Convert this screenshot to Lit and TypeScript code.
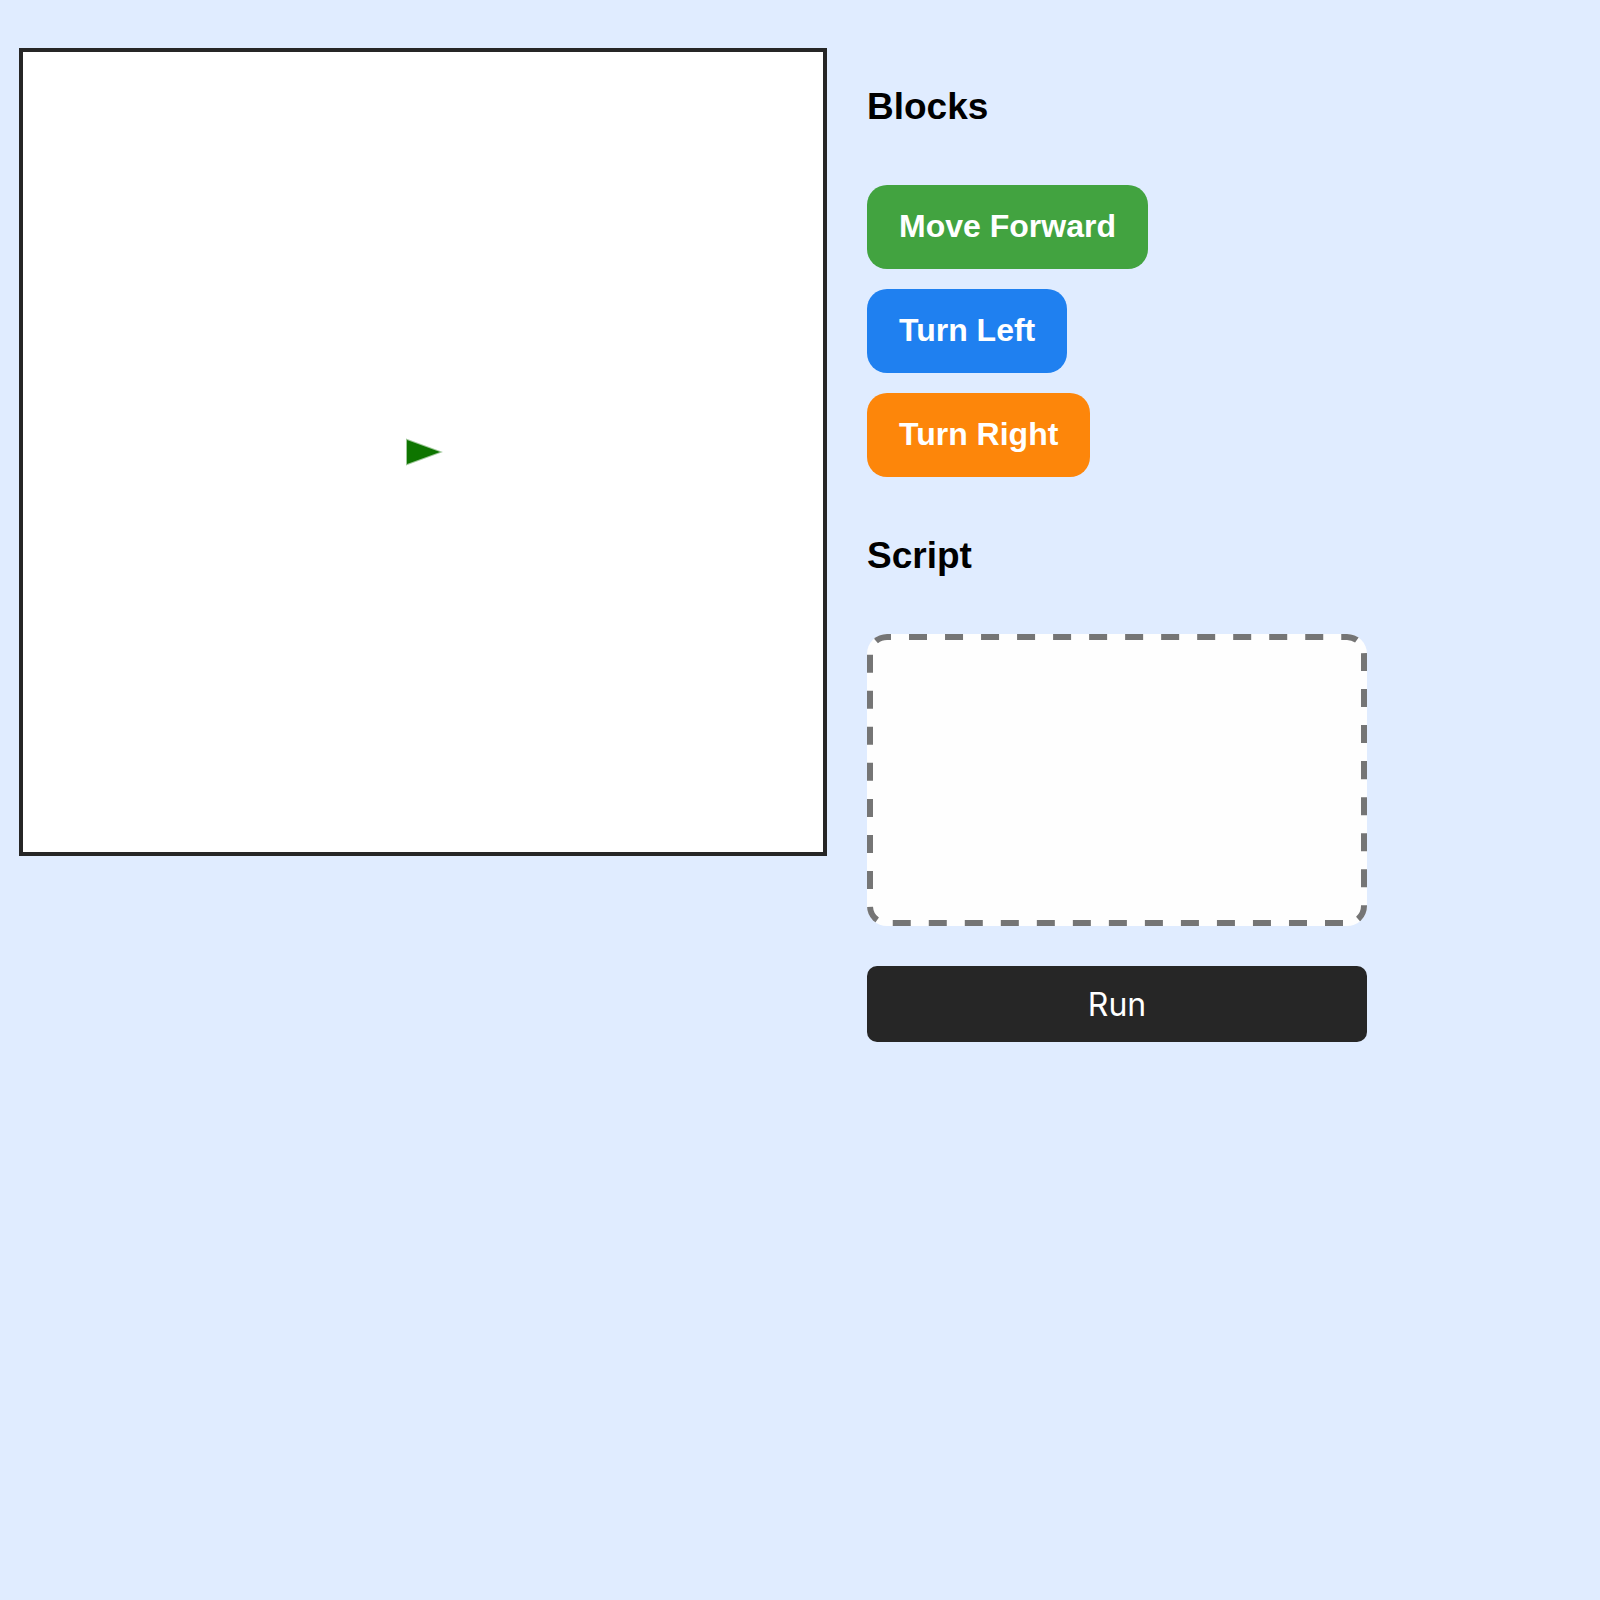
import { LitElement, html, css } from "lit";
import { customElement, state } from "lit/decorators.js";

type BlockKind = "forward" | "left" | "right";

const BLOCKS: { kind: BlockKind; label: string }[] = [
  { kind: "forward", label: "Move Forward" },
  { kind: "left", label: "Turn Left" },
  { kind: "right", label: "Turn Right" },
];

@customElement("app-root")
export class AppRoot extends LitElement {
  static styles = css`
    :host {
      display: block;
      min-height: 100vh;
      box-sizing: border-box;
      padding: 48px 19px;
      background: #e0ecff;
      color: #000;
      font-family: "Liberation Sans", Arial, sans-serif;
    }
    .layout {
      display: flex;
      align-items: flex-start;
      gap: 40px;
    }
    .stage {
      display: block;
      box-sizing: border-box;
      flex: 0 1 808px;
      min-width: 0;
      aspect-ratio: 1;
      border: 4px solid #262626;
      background: #fff;
    }
    .turtle {
      fill: #0e7500;
      stroke: #0e7500;
      stroke-opacity: 0.4;
      stroke-width: 2;
    }
    .panel {
      flex: 0 1 500px;
      min-width: 0;
      padding-top: 38px;
    }
    .heading {
      margin: 0 0 57px;
      font-size: 37px;
      line-height: 42px;
      font-weight: 700;
    }
    .palette {
      display: flex;
      flex-direction: column;
      align-items: flex-start;
      gap: 20px;
      margin-bottom: 58px;
    }
    .block {
      border: 0;
      border-radius: 20px;
      padding: 23px 32px 25px;
      color: #fff;
      font: 700 32px/36px "Liberation Sans", Arial, sans-serif;
      cursor: grab;
    }
    .forward {
      background: #42a340;
    }
    .left {
      background: #1f80f0;
    }
    .right {
      background: #fd860a;
    }
    .script {
      position: relative;
      display: flex;
      flex-direction: column;
      align-items: flex-start;
      gap: 20px;
      box-sizing: border-box;
      min-height: 292px;
      padding: 26px;
      border-radius: 20px;
      overflow: hidden;
      background: #fefefe;
    }
    /* The stroke is twice as wide as the visible border: the outer half is clipped. */
    .outline {
      position: absolute;
      inset: 0;
      width: 100%;
      height: 100%;
      pointer-events: none;
    }
    .dashes {
      fill: none;
      stroke: #757575;
      stroke-width: 12;
      stroke-dasharray: 18 18;
      stroke-dashoffset: 14;
    }
    .run {
      display: block;
      width: 100%;
      margin-top: 40px;
      padding: 21px 20px 19px;
      border: 0;
      border-radius: 10px;
      background: #262626;
      color: #fff;
      font: 400 32px/36px Inter, sans-serif;
      cursor: pointer;
    }
  `;

  @state() private steps: BlockKind[] = [];
  @state() private x = 400;
  @state() private y = 400;
  @state() private angle = 0;

  private add(kind: BlockKind) {
    this.steps = [...this.steps, kind];
  }

  private run() {
    for (const step of this.steps) {
      if (step === "left") this.angle -= 90;
      else if (step === "right") this.angle += 90;
      else {
        const a = (this.angle * Math.PI) / 180;
        this.x += Math.cos(a) * 40;
        this.y += Math.sin(a) * 40;
      }
    }
  }

  render() {
    return html`
      <main class="layout">
        <svg class="stage" viewBox="0 0 800 800" role="img">
          <polygon
            class="turtle"
            points="-16,-12 17,0 -16,12"
            transform="translate(${this.x} ${this.y}) rotate(${this.angle})"
          ></polygon>
        </svg>
        <section class="panel">
          <h3 class="heading">Blocks</h3>
          <div class="palette">
            ${BLOCKS.map(
              (b) => html`<button
                class="block ${b.kind}"
                @click=${() => this.add(b.kind)}
              >${b.label}</button>`
            )}
          </div>
          <h3 class="heading">Script</h3>
          <div class="script">
            <svg class="outline" aria-hidden="true">
              <rect class="dashes" width="100%" height="100%" rx="20" pathLength="1548"></rect>
            </svg>
            ${this.steps.map(
              (kind) => html`<div class="block ${kind}">${
                BLOCKS.find((b) => b.kind === kind)?.label
              }</div>`
            )}
          </div>
          <button class="run" @click=${this.run}>Run</button>
        </section>
      </main>
    `;
  }
}
